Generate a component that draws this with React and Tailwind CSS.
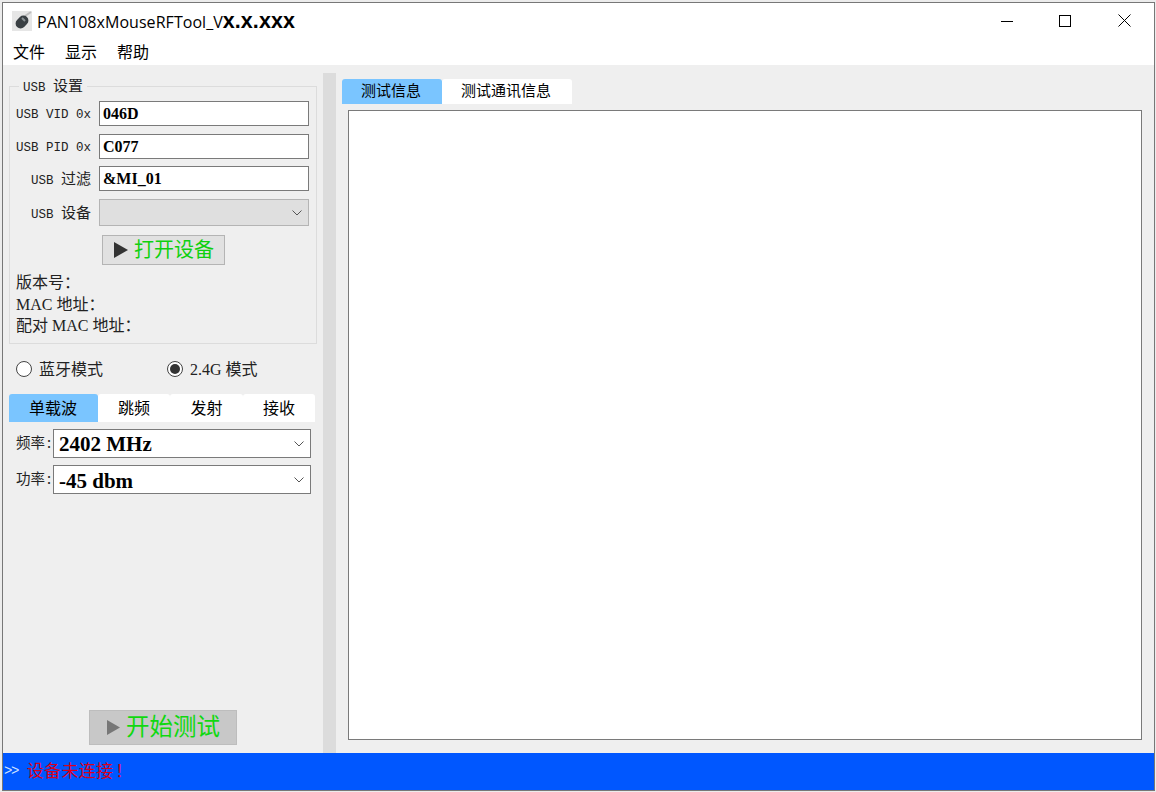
import React from "react";

function Chevron() {
  return (
    <svg width="10" height="6" viewBox="0 0 10 6" className="shrink-0">
      <path d="M0.5 0.5 L5 5 L9.5 0.5" fill="none" stroke="#555" strokeWidth="1" />
    </svg>
  );
}

function Play({ color, w, h }) {
  return (
    <svg width={w} height={h} viewBox="0 0 14 16" preserveAspectRatio="none" className="shrink-0">
      <path d="M0 0 L14 8 L0 16 Z" fill={color} />
    </svg>
  );
}

function UsbLabel({ children, cjk }) {
  return (
    <span className="w-[81px] pt-[3px] text-right text-[12.5px] leading-none whitespace-pre text-[#222] font-['Liberation_Mono','Noto_Sans_CJK_SC',monospace]">
      {children}
      {cjk && <span className="text-[15px]">{cjk}</span>}
    </span>
  );
}

function UsbRow({ label, cjk, value, className }) {
  return (
    <div className={`flex items-center h-[25px] ${className}`}>
      <UsbLabel cjk={cjk}>{label}</UsbLabel>
      <div className="ml-[8px] w-[210px] h-[25px] bg-white border border-[#7a7a7a] pl-[3px] flex items-center text-[16px] font-bold text-black font-['Liberation_Serif',serif]">
        {value}
      </div>
    </div>
  );
}

function SideSelect({ label, value, className, valueClass }) {
  return (
    <div className={`flex items-center ${className}`}>
      <span className="w-[42px] text-right text-[14.5px] text-[#222] font-['Noto_Sans_CJK_SC',sans-serif] leading-none pb-[2px]">
        {label}<span className="ml-[2px]">:</span>
      </span>
      <div className="ml-[2px] w-[258px] h-[29px] bg-white border border-[#7a7a7a] pl-[6px] pr-[6px] flex items-center justify-between text-[21px] font-bold text-black font-['Liberation_Serif',serif]">
        <span className={valueClass}>{value}</span>
        <Chevron />
      </div>
    </div>
  );
}

function Radio({ checked, label, className }) {
  return (
    <div className={`flex items-center ${className}`}>
      <div className="w-[16px] h-[16px] rounded-full bg-white border border-[#444] flex items-center justify-center">
        {checked && <div className="w-[10px] h-[10px] rounded-full bg-[#333]" />}
      </div>
      <span className="ml-[7px] pt-[1px] text-[16px] leading-none text-[#222] font-['Liberation_Serif','Noto_Sans_CJK_SC',serif]">{label}</span>
    </div>
  );
}

export default function App() {
  return (
    <div className="w-[1156px] h-[792px] bg-[#ececec] pl-[2px] pt-[2px] pr-[1px] pb-[1px]">
      <div className="w-full h-full bg-white border border-[#777] flex flex-col overflow-hidden font-['Noto_Sans_CJK_SC',sans-serif]">
        {/* title bar */}
        <div className="h-[35px] flex items-center bg-white shrink-0">
          <div className="ml-[9px] w-[20px] h-[20px] bg-[#e6e6e6] flex items-center justify-center">
            <svg width="20" height="20" viewBox="0 0 20 20">
              <path d="M13 5 L19 1" stroke="#bdbdbd" strokeWidth="2" />
              <rect x="5" y="4" width="10" height="14" rx="5" transform="rotate(45 10 11)" fill="#3a4044" />
              <path d="M10 7 L13 10" stroke="#8a9094" strokeWidth="2" />
            </svg>
          </div>
          <span className="ml-[5px] pt-[2px] text-[16px] text-black leading-none font-['Open_Sans',sans-serif] tracking-[0.05px] whitespace-pre">
            PAN108xMouseRFTool_V<b className="text-[21.5px] font-bold font-['Liberation_Sans',sans-serif]">x.x.xxx</b>
          </span>
          <div className="ml-auto flex items-center h-full">
            <svg width="12" height="12" viewBox="0 0 12 12" className="mr-[46px]"><path d="M0 6.5 H12" stroke="#000" /></svg>
            <svg width="12" height="12" viewBox="0 0 12 12" className="mr-[47px]"><rect x="0.5" y="0.5" width="11" height="11" fill="none" stroke="#000" /></svg>
            <svg width="13" height="13" viewBox="0 0 13 13" className="mr-[23px]"><path d="M0.5 0.5 L12.5 12.5 M12.5 0.5 L0.5 12.5" stroke="#000" /></svg>
          </div>
        </div>

        {/* menu */}
        <div className="h-[27px] flex items-center bg-white shrink-0 pl-[10px] pb-[2px] gap-[20px] text-[16px] text-black leading-none">
          <span>文件</span>
          <span>显示</span>
          <span>帮助</span>
        </div>

        {/* main */}
        <div className="flex-1 flex bg-[#efefef] min-h-0">
          <div className="w-[320px] shrink-0 flex flex-col pl-[6px]">
            <div className="relative mt-[21px] w-[308px] h-[258px] border border-[#dcdcdc] pt-[14px]">
              <span className="absolute left-[9px] top-[-7px] bg-[#efefef] px-[4px] text-[12.5px] leading-[16px] whitespace-pre text-[#222] font-['Liberation_Mono','Noto_Sans_CJK_SC',monospace]">USB <span className="text-[15px]">设置</span></span>
              <UsbRow label="USB VID 0x" value="046D" />
              <UsbRow label="USB PID 0x" value="C077" className="mt-[8px]" />
              <UsbRow label="USB " cjk="过滤" value="&MI_01" className="mt-[7px]" />
              <div className="flex items-center mt-[8px]">
                <UsbLabel cjk="设备">USB </UsbLabel>
                <div className="ml-[8px] w-[210px] h-[27px] bg-[#dfdfdf] border border-[#b4b4b4] pr-[6px] flex items-center justify-end">
                  <Chevron />
                </div>
              </div>
              <div className="ml-[92px] mt-[9px] w-[123px] h-[30px] bg-[#e1e1e1] border border-[#b4b4b4] flex items-center pl-[11px]">
                <Play color="#333" w={14} h={16} />
                <span className="ml-[6px] pb-[2px] text-[20px] leading-none text-[#10d010]">打开设备</span>
              </div>
              <div className="ml-[6px] mt-[7px] text-[16px] leading-[21.5px] text-[#222] font-['Liberation_Serif','Noto_Sans_CJK_SC',serif] whitespace-pre">
                <div>版本号：</div>
                <div>MAC 地址：</div>
                <div>配对 MAC 地址：</div>
              </div>
            </div>

            <div className="flex mt-[17px] h-[16px] pl-[7px]">
              <Radio label="蓝牙模式" className="w-[151px]" />
              <Radio checked label="2.4G 模式" />
            </div>

            {/* sub tabs */}
            <div className="flex mt-[17px] h-[28px] w-[306px] text-[16px] leading-none text-black">
              <div className="w-[89px] bg-[#7ac5ff] rounded-t-[3px] flex items-center justify-center pb-[2px] pr-[1px]">单载波</div>
              <div className="w-[72px] bg-white rounded-t-[3px] flex items-center justify-center pb-[2px]">跳频</div>
              <div className="w-[73px] bg-white rounded-t-[3px] flex items-center justify-center pb-[2px]">发射</div>
              <div className="w-[72px] bg-white rounded-t-[3px] flex items-center justify-center pb-[2px]">接收</div>
            </div>

            <SideSelect label="频率" value="2402 MHz" className="mt-[7px]" valueClass="pt-[2px] -ml-[1px]" />
            <SideSelect label="功率" value="-45 dbm" className="mt-[7px]" valueClass="pt-[4px] -ml-[1px]" />

            <div className="mt-auto mb-[8px] ml-[80px] w-[148px] h-[35px] bg-[#c8c8c8] border border-[#bdbdbd] flex items-center pl-[17px]">
              <Play color="#777" w={13} h={15} />
              <span className="ml-[6px] pb-[4px] text-[23.5px] leading-none text-[#10d810]">开始测试</span>
            </div>
          </div>

          {/* splitter */}
          <div className="w-[13px] bg-[#dcdcdc] mt-[8px] shrink-0" />

          {/* right */}
          <div className="flex-1 flex flex-col pl-[6px] pt-[14px] pr-[12px] pb-[13px]">
            <div className="flex h-[25px] text-[15px] leading-none text-black">
              <div className="w-[100px] bg-[#7ac5ff] rounded-t-[3px] flex items-center justify-center pb-[4px] pr-[2px]">测试信息</div>
              <div className="w-[130px] bg-white rounded-t-[3px] flex items-center justify-center pb-[4px] pr-[2px]">测试通讯信息</div>
            </div>
            <div className="ml-[6px] mt-[6px] flex-1 bg-white border border-[#7a7a7a]" />
          </div>
        </div>

        {/* status bar */}
        <div className="h-[37px] shrink-0 bg-[#0057ff] flex items-center pl-[1px]">
          <span className="pb-[2px] text-[14px] text-[#cfe0ff] font-['Liberation_Mono',monospace] tracking-[-1.5px] leading-none">&gt;&gt;</span>
          <span className="ml-[9px] pb-[5px] text-[17px] text-[#d8001c] leading-none tracking-[0.3px]">设备未连接<span className="ml-[2px]">！</span></span>
        </div>
      </div>
    </div>
  );
}
